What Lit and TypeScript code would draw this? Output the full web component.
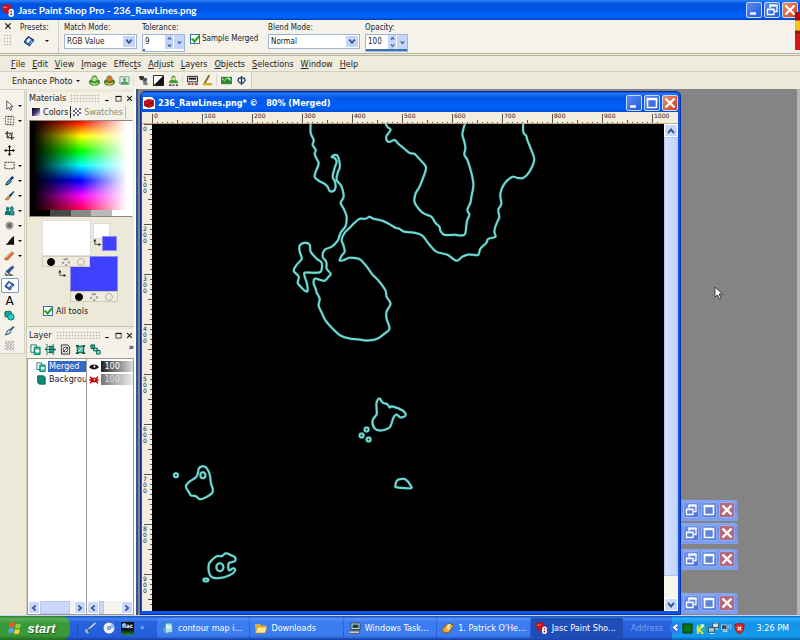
import { LitElement, html, svg, css, nothing } from "lit";
import { customElement, property } from "lit/decorators.js";

const S = (body: unknown, cls = "ic") => html`<svg class=${cls} viewBox="0 0 12 12" aria-hidden="true">${body}</svg>`;

const ICONS: Record<string, unknown> = {
  pointer: svg`<path d="M3 1v9l2.4-2 1.6 3.4 1.4-.7L7 7.3h3z" fill="#fff" stroke="#333" stroke-width=".9"/>`,
  grid: svg`<path d="M1.5 1.5h9v9h-9zM4.5 1v10M7.5 1v10" fill="none" stroke="#222" stroke-dasharray="1.5 1.5"/>`,
  crop: svg`<path d="M3.5 1v7.5H11M1 3.500h7.500V11" fill="none" stroke="#222" stroke-width="1.200"/><path d="M3.500 8.500l6-6" stroke="#555"/>`,
  move: svg`<path d="M6 1v10M1 6h10" stroke="#111" stroke-width="1.200"/><path d="M6 0L4 2.500h4zM6 12L4 9.500h4zM0 6l2.500-2v4zM12 6L9.500 4v4z" fill="#111"/>`,
  rect: svg`<rect x="1" y="2.500" width="10" height="7" fill="none" stroke="#222" stroke-dasharray="2 1"/>`,
  dropper: svg`<path d="M2 11l1-3 3-3 2 2-3 3z" fill="#2ab0c8" stroke="#124"/><path d="M6 4l3-3 2 2-3 3z" fill="#12397a"/>`,
  brush: svg`<path d="M5 6l5.500-5L11.500 2 7 8z" fill="#234a86"/><path d="M1 10c2 0 2-3 4-3.500l1.500 1.500C5.500 11 3 11.500 1 10z" fill="#e08a38" stroke="#734" stroke-width=".5"/>`,
  clone: svg`<path d="M1 11V7.500L3 6 2 4l1-2h2l1 2-1 2 2 1.500V11z" fill="#0c7c78"/><path d="M6 11V7l1.500-1-1-2 1-2h2l1 2-1 2L11 7v4z" fill="#2b9a94" stroke="#023" stroke-width=".5"/>`,
  soften: svg`<circle cx="6" cy="6" r="4.500" fill="#bbb"/><circle cx="6" cy="6" r="3.500" fill="#888"/><circle cx="6" cy="6" r="1.800" fill="#666"/>`,
  burn: svg`<path d="M11 1v9.500H1.500C5 9 6 4 11 1z" fill="#111"/>`,
  eraser: svg`<path d="M1 9l7-7 3 1.500-7 7.500-3-.5z" fill="#e07038" stroke="#8a3a18" stroke-width=".5"/><path d="M2.500 8l6-6" stroke="#f9d0b0"/>`,
  bgerase: svg`<path d="M2 7l7-6 2 1.500L5 9z" fill="#2c5aa8" stroke="#123" stroke-width=".5"/><path d="M1 8.500l2 2M4 8l4 3M1 11h9" stroke="#123"/>`,
  bucket: svg`<path d="M1 7L5 1.500l6 3.500-4.500 6z" fill="#2f5f9c" stroke="#123d70"/><path d="M3 6.500l2.500-3.500 2.500 1.500-2.500 3.800z" fill="#e4f0ff"/><path d="M7.500 5.500l1.500 1-2 3" fill="none" stroke="#a8c8ee"/>`,
  shape: svg`<rect x="1" y="1.500" width="7" height="6" rx="1" fill="#18a89c" stroke="#065"/><circle cx="7.500" cy="7.500" r="3.500" fill="#2acdc0" stroke="#076" />`,
  knife: svg`<path d="M1.500 11L4 6l2-1 1.500 2L6.500 9z" fill="#cfe2f0" stroke="#245"/><path d="M6 5l4-4 1.500 1.500-4 4z" fill="#345a86"/>`,
  warp: svg`<path d="M1.500 1.500h9v9h-9z" fill="none" stroke="#aaa" stroke-dasharray="2 1"/><path d="M2 2l8 8M10 2l-8 8M6 2l3 4-3 4-3-4z" fill="none" stroke="#aaa"/>`,
  photo1: svg`<path d="M0 7.500C0 5.500 1.500 5 3 5 2 2.500 4 .5 6 .5S10 2.500 9 5c1.500 0 3 .5 3 2.500 0 3-3 4-6 4s-6-1-6-4z" fill="#3a8a35"/><circle cx="6" cy="4.500" r="2.500" fill="#b8e08a"/><path d="M2 8.500q4 2.500 8 0" fill="none" stroke="#c9e77b" stroke-width="1.500"/>`,
  photo2: svg`<path d="M0 7.500C0 5.500 1.500 5 3 5 2 2.500 4 .5 6 .5S10 2.500 9 5c1.500 0 3 .5 3 2.500 0 3-3 4-6 4s-6-1-6-4z" fill="#4a7d2d"/><circle cx="6" cy="4" r="3" fill="#d9762c"/><path d="M2 8.500q4 2.500 8 0" fill="none" stroke="#f0c53f" stroke-width="1.500"/>`,
  photo3: svg`<path d="M1 2h10v8H1z" fill="#dff0e4" stroke="#5a9c76"/><path d="M2 10c0-3 2-3 4-3s4 0 4 3" fill="#46a052"/><circle cx="6" cy="5" r="1.700" fill="#559a6e"/>`,
  vase: svg`<path d="M1 1h5l1 3-2 2-3-1z" fill="#333"/><path d="M5 5l4 1 2 5H6z" fill="#7a7c86"/><circle cx="8" cy="5" r="2" fill="#49505c"/>`,
  contrast: svg`<path d="M.5 .5h11v11H.5z" fill="#fff" stroke="#111"/><path d="M11.500.5v11H.5z" fill="#111"/>`,
  person: svg`<path d="M1 9c0-3 2-3 3-4C3 2 5 .5 6 .5S9 2 8 5c1 1 3 1 3 4z" fill="#4f9a35"/><circle cx="6" cy="4" r="1.800" fill="#d6e48c"/><path d="M1 11h3M5 11h2M8.500 11H11" stroke="#222" stroke-width="1.500"/>`,
  strip: svg`<path d="M.5 1.500h11v6H.5z" fill="#eee" stroke="#111"/><path d="M2 4h8" stroke="#111" stroke-width="2"/><path d="M1 10h3M5 10h2M8.500 10H12" stroke="#b33" stroke-width="2"/>`,
  angle: svg`<path d="M8 0L2 10.500" stroke="#8a6a18" stroke-width="2"/><path d="M1 10h10" stroke="#d8ac28" stroke-width="2.500"/>`,
  landscape: svg`<path d="M0 2h12v8H0z" fill="#2f8c3b"/><path d="M1 4l3 2 3-3 4 3" fill="none" stroke="#c9ecbd"/><circle cx="9" cy="4" r="1" fill="#ffe"/>`,
  phi: svg`<path d="M6 1v10" stroke="#1c3f63" stroke-width="1.500"/><path d="M3 3.500h6L10 6 8 8.500H4L2 6z" fill="none" stroke="#1c3f63" stroke-width="1.300"/>`,
  layer: svg`<path d="M1 1h6v8H1z" fill="#fff" stroke="#0a6b64"/><path d="M4.500 3.500h6.500v8H4.500z" fill="#2ec0b0" stroke="#075"/><path d="M6 6h4v3H6z" fill="#fff"/>`,
  layerbg: svg`<path d="M2 1h7l2 2v8H4L2 9z" fill="#0d8a7e" stroke="#054"/>`,
  layerv: svg`<path d="M1 1h10v10H1z" fill="none" stroke="#064" stroke-dasharray="2 5"/><path d="M2 3h5v6H2z" fill="#fff" stroke="#0a6b64"/><path d="M5 2.500h4.500v7H5z" fill="#18a596" stroke="#064"/><path d="M0 6h12" stroke="#064"/>`,
  mask: svg`<path d="M1.500 1h7l2 2v8h-9z" fill="#ddd" stroke="#333"/><circle cx="6" cy="6" r="2.500" fill="#fff" stroke="#444"/><path d="M3 9l6-6" stroke="#444"/>`,
  group: svg`<path d="M1 1h3v2H1zM8 1h3v2H8zM1 9h3v2H1zM8 9h3v2H8z" fill="#054"/><path d="M2.500 2.500h7v7h-7z" fill="#5abdb2" stroke="#143"/><path d="M4 8l4-4" stroke="#fff"/>`,
  link: svg`<path d="M1 1h4v4H1z" fill="#1fae9f" stroke="#054"/><path d="M7 7h4v4H7zM4 4.500h4v3H4z" fill="#7fdcd2" stroke="#054"/>`,
  eye: svg`<path d="M0 6c3-4 9-4 12 0-3 4-9 4-12 0z" fill="#111"/><circle cx="6.500" cy="5.500" r="1.300" fill="#fff"/>`,
  eyeoff: svg`<path d="M0 6c3-4 9-4 12 0-3 4-9 4-12 0z" fill="#c11"/><path d="M1 2l10 8M11 2L1 10" stroke="#b00" stroke-width="1.500"/><circle cx="6.500" cy="5.500" r="1" fill="#fff"/>`,
  psp: svg`<path d="M0 2l3-2 5 1 1 5-3 3-5-1z" fill="#c3111a"/><path d="M1 3h4" stroke="#f77"/><circle cx="8.500" cy="6.800" r="2.400" fill="#fff"/><circle cx="8.500" cy="9.500" r="2.500" fill="#fff"/><circle cx="8.500" cy="6.800" r=".8" fill="#912"/><circle cx="8.500" cy="9.500" r=".9" fill="#912"/>`,
  pspdoc: svg`<path d="M0 0h9l3 3v9H0z" fill="#fff"/><path d="M1 4l4-2 6 1v6l-5 2-5-2z" fill="#c3111a"/><path d="M6 6h4M3 8h3" stroke="#511"/>`,
  notes: svg`<path d="M3 1h7l1 9-7 1.500L1 9z" fill="#9fe0ee" stroke="#3a86b4"/><path d="M4 4h5M4 6h5" stroke="#fff"/><path d="M3 1v9" stroke="#2d75ab"/>`,
  folder: svg`<path d="M0 2h5l1 1.500h5v2H3L.5 10z" fill="#e8b030"/><path d="M2.500 5H12l-2 6H.5z" fill="#ffe68a" stroke="#c8901c" stroke-width=".6"/>`,
  computer: svg`<path d="M2 1h9v6.500H2z" fill="#d8d8d0" stroke="#444"/><path d="M3.500 2.500h6v3.500h-6z" fill="#124a4a"/><path d="M0 9h10.500v2.500H0z" fill="#d0d0c8" stroke="#444" stroke-width=".7"/>`,
  winamp: svg`<path d="M0 8l5-6.500L12 3 7 10.500 2 11z" fill="#f0a030" stroke="#6a4a20" stroke-width=".8"/><path d="M7 2L4 6.500h2.500L4.500 10 9 5.500H6.500L9 2z" fill="#fff4c8"/>`,
  pen: svg`<path d="M2 8.500L10.500 1" stroke="#d8dfe8" stroke-width="1.500"/><path d="M0 6.500l4 4-1 1.500-3-2z" fill="#9fb2c8"/><path d="M3 9l2-2" stroke="#555" stroke-width="2"/>`,
  disc: svg`<circle cx="6" cy="6" r="5.500" fill="#e9f1fb"/><path d="M6 6L9 1.200A5.500 5.500 0 0 1 11.500 6z" fill="#9ec0e8"/><circle cx="6" cy="6" r="2" fill="#5a7ea8"/><circle cx="6" cy="6" r=".8" fill="#fff"/>`,
  traygreen: svg`<path d="M1 1h10v10H1z" fill="#096a12" stroke="#023a06"/><path d="M1 4h10M1 7h10M4.500 1v10M8 1v10" stroke="#0b8318" stroke-width=".6"/>`,
  trayk: svg`<path d="M2 1h9v8H2z" fill="#2bb6a4"/><path d="M3 3v9M8.500 3L4 7.500l5 4.500" fill="none" stroke="#efe83a" stroke-width="2"/><circle cx="8" cy="3" r="2" fill="#d4f2ec"/>`,
  net: svg`<path d="M5 0h6.500v5H5z" fill="#cfe2e8" stroke="#345"/><path d="M.5 5H7v5H.5z" fill="#a9d0d4" stroke="#345"/><path d="M2 11.500h5M8 6.500h3" stroke="#dfe"/>`,
  wifi: svg`<path d="M.5 2h6v5h-6z" fill="#33456c" stroke="#c5cee0"/><path d="M2 9h5" stroke="#ccd" stroke-width="2"/><path d="M8 2q1.500 2 0 4M10 1q2.500 3 0 6" fill="none" stroke="#9dd6f8"/>`,
  shield: svg`<path d="M6 0l5 1.500c0 6-1 8-5 10.500-4-2.500-5-4.500-5-10.500z" fill="#d8251d" stroke="#822"/><path d="M4 4l4 4M8 4L4 8" stroke="#fff" stroke-width="1.400"/>`,
  chev: svg`<path d="M3 4l3 3.500L9 4" fill="none" stroke="#3c5a90" stroke-width="2"/>`,
  chevup: svg`<path d="M3 8l3-3.500L9 8" fill="none" stroke="#3c5a90" stroke-width="2"/>`,
  chevl: svg`<path d="M8 3L4.500 6 8 9" fill="none" stroke="#3c5a90" stroke-width="2"/>`,
  chevr: svg`<path d="M4 3l3.500 3L4 9" fill="none" stroke="#3c5a90" stroke-width="2"/>`,
  swap: svg`<path d="M2.500 4v4.500H8" fill="none" stroke="#222"/><path d="M2.500 1L.5 4.500h4zM11 8.500L7.500 6.500v4z" fill="#222"/>`,
  pmin: svg`<path d="M2 9.500h6" stroke="#111" stroke-width="2"/>`,
  pmax: svg`<path d="M1.500 2.500h9v8h-9z" fill="none" stroke="#111" stroke-width="1.200"/><path d="M1 2.500h10" stroke="#111" stroke-width="2"/>`,
  px: svg`<path d="M2 2l8 8M10 2l-8 8" stroke="#111" stroke-width="1.800"/>`,
  min: svg`<path d="M2 9.500h6" stroke="#fff" stroke-width="2.400"/>`,
  max: svg`<path d="M1.500 2v8.500h9V2" fill="none" stroke="#fff" stroke-width="1.600"/><path d="M.7 2h10.600" stroke="#fff" stroke-width="2.400"/>`,
  restore: svg`<path d="M4 4V1.500h7v6H8.500" fill="none" stroke="#fff" stroke-width="1.300"/><path d="M1.500 5v5.500h6.500V5" fill="none" stroke="#fff" stroke-width="1.300"/><path d="M1 5.300h7.500M3.500 1.500h8" stroke="#fff" stroke-width="1.800"/>`,
  close: svg`<path d="M1.500 1.500l9 9M10.500 1.500l-9 9" stroke="#fff" stroke-width="2.400"/>`,
};
const icon = (n: string) => S(ICONS[n]);

const reset = css`
  * { box-sizing: border-box; }
  button, input, select { font: inherit; color: inherit; margin: 0; padding: 0; border: 0; background: none; border-radius: 0; min-width: 0; }
  button { display: flex; align-items: center; justify-content: center; white-space: nowrap; }
  .ic { width: 12px; height: 12px; display: block; flex: none; }
`;

@customElement("window-buttons")
class WindowButtons extends LitElement {
  @property() kinds = "min max close";
  @property({ type: Boolean, reflect: true }) faded = false;
  static styles = [reset, css`
    :host { display: flex; gap: 2px; }
    button { width: 16px; height: 16px; border: 1px solid #c7d8fb; border-radius: 2px; background: linear-gradient(135deg, #5c8cf2, #2258dc); }
    .close { background: linear-gradient(135deg, #ee8a68, #cf4020); }
    :host([faded]) button { border-color: #8fb0f4; background: linear-gradient(135deg, #7195ea, #4a72d6); }
    :host([faded]) .close { background: #b8687e; }
  `];
  render() {
    return this.kinds.split(" ").map((k) => html`<button class=${k} aria-label=${k}>${icon(k)}</button>`);
  }
}

type Pt = [number, number];
const pts = (s: string): Pt[] => s.split(" ").map((p) => p.split(",").map(Number) as Pt);

/** Catmull-Rom curve through all points. */
function curve(p: Pt[], closed: boolean) {
  const n = p.length;
  const at = (i: number) => (closed ? p[(i + n) % n] : p[Math.max(0, Math.min(n - 1, i))]);
  let d = `M${p[0]}`;
  for (let i = 0; i < (closed ? n : n - 1); i++) {
    const [a, b, c, e] = [at(i - 1), at(i), at(i + 1), at(i + 2)];
    d += `C${b[0] + (c[0] - a[0]) / 6} ${b[1] + (c[1] - a[1]) / 6} ${c[0] - (e[0] - b[0]) / 6} ${c[1] - (e[1] - b[1]) / 6} ${c[0]} ${c[1]}`;
  }
  return d;
}

const COAST = [
  "311,122 311,133 314,140 313,145 316,150 315,154 317,159 319,163 318,167 316,172 315,177 318,180 321,182 325,184 328,187 330,191 334,191 336,187 335,181 333,177 335,168 337,162 335,158 332,157 335,155 338,156 340,163 340,168 338,173 337,180 341,185 343,190 344,197 341,203 343,207 345,211 347,217 346,226 341,233 338,241 332,247 325,250 323,257 326,261 327,264 327,269 331,274 329,277 325,281 320,280 315,279 314,284 316,289 317,293 320,299 319,306 322,313 326,321 333,329 341,336 350,339 360,340 368,341 378,339 385,334 390,329 387,319 387,312 391,304 387,297 386,291 379,281 373,275 368,268 363,262 359,259 350,258 345,260 340,261 342,256 345,252 344,246 342,240 345,233 350,228 355,223 360,219 366,219 370,217 374,219 383,221 391,225 396,228 400,229 405,232 415,233 423,236 430,245 437,252 448,255 457,261 463,257 468,255 474,255 479,255 481,249 487,243 489,239 496,237 495,232 496,227 498,222 500,217 499,210 502,204 501,194 505,184 513,177 518,178 524,178 530,172 535,160 532,150 528,140 527,136 524,132 524,122",
  "385,122 388,127 391,130 387,136 387,140 390,142 395,140 399,144 404,148 410,153 415,154 418,157 426,166 426,171 424,177 420,187 416,194 415,202 420,210 425,214 432,217 436,223 440,227 441,231 445,235 455,235 465,235 467,225 468,220 470,215 468,210 471,203 472,197 474,185 472,173 468,160 465,155 466,148 465,142 463,135 464,129 466,122",
];
const ISLANDS = [
  "305,243 300,246 300,252 302,259 297,265 294,271 299,277 298,283 301,287 305,291 308,291 307,283 305,277 305,273 313,273 321,272 322,263 317,259 311,252 310,245",
  "380,399 377,403 377,409 377,415 373,421 375,429 381,431 390,428 394,418 397,415 401,418 406,416 403,411 393,407 390,408 388,405 383,403",
  "396,486 397,482 400,480 406,480 411,486 411,489 397,488",
  "203,467 199,469 198,474 196,478 190,482 186,487 189,493 191,496 196,497 200,500 206,498 212,494 213,490 211,484 210,476 207,469",
  "226,554 222,557 217,557 212,561 209,565 209,573 212,578 220,579 230,576 235,572 234,569 229,571 229,564 235,562 235,558 231,556",
];
const OUTLINES = [...COAST.map((s) => curve(pts(s), false)), ...ISLANDS.map((s) => curve(pts(s), true))];
const DOTS = [[367, 430, 2, 2], [362, 436, 2, 2], [369, 440, 2, 2], [176, 476, 2, 2], [203, 476, 2.5, 3], [220, 568, 3.5, 4], [206, 581, 2.5, 1.5]];

@customElement("image-window")
class ImageWindow extends LitElement {
  static styles = [reset, css`
    :host { display: flex; flex-direction: column; border: 1px solid #0b2fa0; border-radius: 5px 5px 0 0; background: #0d55e6; padding: 1px 2px 3px 1px; }
    .title { display: flex; align-items: center; gap: 3px; height: 19px; flex: none; padding: 0 0 0 1px; background: linear-gradient(#2a7df8, #0058e8 25%, #0060f6 80%, #0050d8); color: #fff; font: bold 9px "DejaVu Sans Condensed", "DejaVu Sans", sans-serif; white-space: pre; }
    .title span { flex: 1; }
    .body { flex: 1; display: grid; grid-template: 12px 1fr / 10px 1fr 14px; min-height: 0; background: #f2eddd; }
    .hruler { grid-column: 1 / 4; width: 100%; height: 12px; border-bottom: 1px solid #c8a878; }
    .vruler { width: 10px; height: 100%; }
    .rul { stroke: #555; stroke-width: 1; }
    .num { font: 6px "DejaVu Sans", sans-serif; fill: #222; }
    .canvas { background: #000; width: 100%; height: 100%; display: block; min-height: 0; }
    .line { fill: none; stroke: #74d9d2; stroke-width: 2; stroke-linejoin: round; }
    .glow { fill: none; stroke: #0a3d3b; stroke-width: 3; stroke-linejoin: round; }
    .bar { display: flex; flex-direction: column; background: #f6f5ee; }
    .bar button { height: 13px; background: #c9d8fc; border: 1px solid #fff; }
    .thumb { flex: 1; background: linear-gradient(90deg, #d8e3ff, #c2d2fb); border: 1px solid #b4c6f6; }
    .track { height: 22px; }
  `];
  render() {
    const ticks = Array.from({ length: 102 }, (_, i) => i);
    return html`
      <div class="title">${icon("pspdoc")}<span>236_RawLines.png* ©   80% (Merged)</span><window-buttons></window-buttons></div>
      <div class="body">
        <svg class="hruler">
          ${ticks.map((i) => svg`<path class="rul" d="M${10.5 + i * 5} 12v${i % 10 ? (i % 5 ? -2 : -4) : -10}"/>`)}
          ${ticks.filter((i) => i % 10 === 0).map((i) => svg`<text class="num" x=${12 + i * 5} y="6">${i * 10}</text>`)}
        </svg>
        <svg class="vruler">
          ${ticks.slice(0, 97).map((i) => svg`<path class="rul" d="M10 ${0.5 + i * 5}h${i % 10 ? (i % 5 ? -2 : -4) : -8}"/>`)}
          ${ticks.slice(0, 97).filter((i) => i % 10 === 0).map((i) => [...String(i * 10)].map((c, k) => svg`<text class="num" x="1" y=${7 + i * 5 + k * 6}>${c}</text>`))}
        </svg>
        <svg class="canvas" viewBox="152 124 513 487" preserveAspectRatio="xMinYMin meet" role="img" aria-label="Contour lines">
          ${["glow", "line"].map((c) => svg`${OUTLINES.map((d) => svg`<path class=${c} d=${d}/>`)}${DOTS.map(([x, y, a, b]) => svg`<ellipse class=${c} cx=${x} cy=${y} rx=${a} ry=${b}/>`)}`)}
        </svg>
        <div class="bar">
          <button aria-label="Scroll up">${icon("chevup")}</button><div class="thumb"></div><div class="track"></div>
          <button aria-label="Scroll down">${icon("chev")}</button>
        </div>
      </div>`;
  }
}

const TOOLS: [string, boolean][] = [["pointer", true], ["grid", true], ["crop", false], ["move", false], ["rect", true], ["dropper", true], ["brush", true], ["clone", true], ["soften", true], ["burn", true], ["eraser", true], ["bgerase", false], ["bucket", false], ["text", false], ["shape", false], ["knife", false], ["warp", false]];
const MENUS: [string, string, string][] = [["", "F", "ile"], ["", "E", "dit"], ["", "V", "iew"], ["", "I", "mage"], ["Effec", "t", "s"], ["", "A", "djust"], ["", "L", "ayers"], ["", "O", "bjects"], ["", "S", "elections"], ["", "W", "indow"], ["", "H", "elp"]];
const TASKS: [string, string][] = [["notes", "contour map i..."], ["folder", "Downloads"], ["computer", "Windows Task..."], ["winamp", "1. Patrick O'He..."], ["psp", "Jasc Paint Sho..."]];

@customElement("app-root")
class AppRoot extends LitElement {
  static styles = [reset, css`
    :host { display: flex; flex-direction: column; min-height: 100vh; position: relative; overflow: hidden; background: #ece9d8; color: #222; font: 9px/12px "DejaVu Sans Condensed", "DejaVu Sans", sans-serif; }
    .title { display: flex; align-items: center; gap: 3px; height: 20px; padding: 0 2px 0 2px; background: linear-gradient(#2b83f8, #0052dd 20%, #0059ee 60%, #0066ff 85%, #0040b8); color: #fff; font: bold 10px "Lato", "DejaVu Sans Condensed", sans-serif; }
    .title span { flex: 1; white-space: nowrap; }
    .title .ic { width: 13px; height: 13px; }
    .options { display: flex; height: 34px; background: #f5f2ea; border-bottom: 1px solid #b5b5a2; font-size: 8px; line-height: 10px; }
    .handle { width: 15px; display: flex; flex-direction: column; align-items: center; gap: 4px; padding-top: 2px; }
    .handle button .ic { width: 8px; height: 8px; }
    .dots { background-image: radial-gradient(circle, #bbb8aa 40%, transparent 50%); background-size: 3px 3px; }
    .handle .dots { width: 9px; height: 12px; }
    .opt { display: flex; flex-direction: column; gap: 1px; padding-top: 3px; margin-left: 5px; flex: none; white-space: nowrap; }
    .presets { width: 39px; border-right: 1px dotted #aaa; }
    .presets button { justify-content: flex-start; gap: 10px; padding: 1px 0 0 3px; }
    .w73 { width: 73px; } .w43 { width: 43px; } .w92 { width: 92px; }
    .combo { display: flex; height: 15px; align-items: center; border: 1px solid #9db6d8; background: #fff; position: relative; }
    .combo select { appearance: none; flex: 1; width: 100%; height: 13px; padding-left: 2px; }
    .combo .ic { position: absolute; right: 1px; top: 1px; background: #c4d5fc; height: 11px; pointer-events: none; }
    .spin { display: flex; height: 18px; border: 1px solid #9db6d8; background: #fff; align-items: flex-start; position: relative; }
    .spin input[type="text"] { width: 22px; height: 12px; padding-left: 2px; flex: 1; }
    .spin button { width: 8px; height: 14px; background: #c4d5fc; flex-direction: column; }
    .spin button.drop { width: 10px; margin-left: 1px; }
    .spin .ic { width: 7px; height: 7px; }
    .level { position: absolute; left: 0; bottom: 0; height: 2px; background: #3d72ae; }
    .check { display: flex; align-items: center; gap: 3px; white-space: nowrap; }
    .check input { appearance: none; width: 10px; height: 10px; border: 1px solid #3a6ea0; background: #fff; display: grid; place-items: center; }
    .check input::before { content: ""; width: 3px; height: 6px; border: solid #21a121; border-width: 0 2px 2px 0; rotate: 42deg; translate: 0 -1px; }
    .merged { width: 73px; margin-left: 5px; padding-top: 4px; gap: 2px; }
    .menus { display: flex; align-items: center; height: 17px; gap: 7px; padding-left: 11px; border-top: 1px solid #b5b5a2; border-bottom: 1px solid #d2cebc; margin-top: 1px; background: #efebdd; }
    .toolbar { display: flex; height: 17px; width: 252px; align-items: center; gap: 3px; padding-left: 12px; background: #f4f1e8; border-right: 1px solid #d2cebc; }
    .tb { display: flex; gap: 4px; padding-left: 4px; border-left: 1px solid #ddd8c8; }
    .tb .ic { width: 11px; height: 11px; }
    .tri { display: block; width: 0; height: 0; border: 2px solid transparent; border-top-color: #111; border-bottom: 0; }
    .tb:first-of-type { border: 0; margin-left: 2px; }
    .enh { gap: 3px; }
    .work { flex: 1; display: flex; min-height: 0; }
    .strip { width: 25px; align-self: flex-start; background: #f5f2ea; border: 1px solid #d5d1c0; border-left: 0; padding: 8px 0 0 1px; }
    .tool { width: 22px; height: 15px; justify-content: flex-start; gap: 3px; padding-left: 3px; }
    .tool .ic { width: 11px; height: 11px; }
    .tool.on { width: 18px; height: 15px; background: #fff; border: 1px solid #7b9ac8; border-radius: 2px; padding-left: 2px; }
    .letter { width: 11px; font: 12px/12px "DejaVu Sans", sans-serif; color: #000; }
    .panels { width: 110px; margin-left: 1px; padding-top: 3px; display: flex; flex-direction: column; background: #ece9d8; border-right: 2px solid #fff; border-left: 1px solid #cfcbb9; }
    .phead { display: flex; align-items: center; height: 12px; padding: 0 1px 0 2px; gap: 4px; background: #f4f1e8; }
    .phead .dots { flex: 1; height: 8px; }
    .phead button .ic { width: 7px; height: 7px; }
    .tabs { display: flex; height: 16px; align-items: center; background: #f4f1e8; gap: 2px; padding-left: 5px; }
    .tabs button { gap: 3px; padding-right: 2px; border-right: 1px solid #222; }
    .tabs .off { color: #8e8a58; border-color: #bbb; }
    .chip { width: 8px; height: 8px; background: linear-gradient(135deg, #000, #437 50%, #fff); }
    .chip2 { width: 8px; height: 8px; background: repeating-conic-gradient(#668 0 25%, #fff 0 50%) 0 0 / 4px 4px; }
    .picker { margin: 0 1px 0 2px; border: 1px solid #8a8878; border-right-color: #fff; }
    .hue { height: 89px; background: linear-gradient(90deg, #000 3%, rgb(0 0 0 / 0) 50%), linear-gradient(90deg, rgb(255 255 255 / 0) 50%, #fff 95%), linear-gradient(red, #ff0 17%, #0f0 34%, #0ff 50%, #00f 67%, #f0f 84%, #f04); }
    .grays { display: flex; height: 6px; background: linear-gradient(90deg, #000 20%, #484848 20% 40%, #888 40% 60%, #bbb 60% 80%, #fff 80%); }
    .swatches { position: relative; height: 88px; flex: none; }
    .sw, .row3, .swap { position: absolute; }
    .white { background: #fff; border: 1px solid #ddd; } .blue { background: #4040ff; border: 1px solid #8e8ee8; }
    .fg { left: 15px; top: 3px; width: 49px; height: 36px; } .bg { left: 43px; top: 39px; width: 48px; height: 36px; }
    .fgs { left: 66px; top: 6px; width: 17px; height: 16px; } .bgs { left: 75px; top: 19px; width: 15px; height: 15px; }
    .r1 { left: 15px; top: 39px; } .r2 { left: 43px; top: 74px; }
    .s1 { left: 66px; top: 21px; } .s2 { left: 31px; top: 52px; }
    .swap .ic { width: 9px; height: 9px; }
    .row3 { display: flex; width: 48px; background: #efebdd; border: 1px solid #cfcbb9; height: 11px; justify-content: space-around; align-items: center; }
    .row3 i { width: 8px; height: 8px; border-radius: 50%; border: 1px solid #b9b5a5; }
    .row3 i:first-child { background: #000; border-color: #000; } .row3 i:nth-child(2) { border: 2px dotted #999; }
    .all { margin: 0 0 0 16px; height: 12px; }
    .lay { margin-top: 9px; border-top: 1px solid #c5c1ae; padding-top: 2px; flex: 1; display: flex; flex-direction: column; min-height: 0; }
    .ltools { display: flex; gap: 4px; height: 17px; align-items: center; padding-left: 3px; background: #f4f1e8; }
    .ltools .ic { width: 11px; height: 11px; }
    .ltools span { margin: -6px 0 0 auto; font-weight: bold; }
    .lists { flex: 1; display: flex; gap: 1px; background: #9c9a8c; padding: 1px; }
    .col { background: #fff; display: flex; flex-direction: column; overflow: hidden; padding-top: 1px; }
    .c1 { flex: 59; width: 59px; } .c2 { flex: 46; width: 46px; }
    .lrow { display: flex; gap: 2px; height: 13px; align-items: center; overflow: hidden; padding-left: 8px; white-space: nowrap; line-height: 11px; }
    .c2 .lrow { padding-left: 2px; }
    .lrow .ic { width: 10px; height: 10px; }
    .lrow b { font-weight: normal; padding: 0 1px; } .lrow .sel { background: #3169c6; color: #fff; flex: 1; }
    .op { flex: 1; color: #fff; padding-left: 3px; background: linear-gradient(90deg, #222, #ddd); }
    .op2 { color: #ddd; padding-left: 3px; flex: 1; background: linear-gradient(90deg, #777, #eee); }
    .hbar { margin-top: auto; display: flex; height: 13px; background: #f4f3ec; }
    .hbar button { width: 12px; background: #c9d8fc; border: 1px solid #fff; } .hbar button .ic { width: 10px; height: 10px; }
    .hbar .mid { flex: 1; display: flex; } .mid i { background: #c9d8fc; border: 1px solid #b4c6f6; width: 88%; } .c2 .mid i { width: 20%; }
    .mdi { flex: 1; position: relative; background: #848484; border-right: 3px solid #b9b7ab; border-left: 2px solid #33568e; min-width: 0; }
    .doc { position: absolute; left: 2px; top: 2px; bottom: 0; width: calc(100% - 118px); }
    .mini { position: absolute; right: 59px; height: 21px; padding: 2px 3px 3px 60px; background: linear-gradient(#86a8f4, #6c8ce6 30%, #7f9ff0); border-radius: 0 4px 0 0; }
    .m1 { bottom: 94px; } .m2 { bottom: 71px; } .m3 { bottom: 45px; } .m4 { bottom: 1px; }
    .cursor { position: absolute; right: 73px; top: 197px; width: 10px; height: 14px; }
    .flag { position: absolute; right: 0; top: 12px; width: 5px; height: 38px; background: linear-gradient(#a80d12 20%, #f2c21b 25% 48%, #8d1411 50% 55%, #d21a1a 58%); }
    .taskbar { display: flex; align-items: center; height: 25px; flex: none; border-top: 1px solid #c3d5f8; background: linear-gradient(#1f4fb8, #3f86f4 12%, #2a63dc 25%, #245ddb 85%, #1941a5); color: #fff; }
    .start { width: 70px; height: 24px; gap: 5px; background: linear-gradient(#2c7c2c, #58b058 12%, #399a39 30%, #3a9a3a 80%, #236d23); border-radius: 0 8px 8px 0; color: #fff; font: italic bold 13px "Liberation Sans", sans-serif; text-shadow: 1px 1px 1px #1c501c; padding-right: 6px; }
    .start .ic { width: 14px; height: 14px; }
    .quick { display: flex; align-items: center; gap: 6px; width: 80px; margin-left: 7px; padding-left: 7px; border-left: 1px dotted #173f9c; }
    .flac { width: 13px; height: 13px; background: linear-gradient(#111 60%, #283); color: #fff; font: bold 6px/8px "DejaVu Sans Condensed", sans-serif; display: block; text-align: center; }
    .more { font-size: 8px; align-self: flex-start; color: #b8ccf4; }
    .tasks { flex: 1; display: flex; gap: 1px; min-width: 0; }
    .task { flex: 1; height: 20px; justify-content: flex-start; gap: 4px; padding-left: 5px; background: linear-gradient(#5a94fa, #3b7cf0 20%, #3b7cf0 85%, #2f66d2); border-radius: 2px; overflow: hidden; }
    .task.on { background: #1e4db8; }
    .addr { width: 47px; text-align: right; color: #7ba2ec; padding-right: 7px; margin-right: 2px; }
    .tray { display: flex; align-items: center; gap: 2px; height: 24px; width: 128px; background: linear-gradient(#0c63c8, #2aaef6 10%, #1392ea 30%, #139bec 85%, #0d62b0); }
    .tray time { margin-left: auto; padding-right: 11px; }
    .tray .round { width: 10px; height: 12px; border-radius: 50%; background: #2e7be6; margin-left: -2px; }
    .tray .ic { width: 11px; height: 11px; }
    .round .ic { filter: brightness(5); }
  `];

  spin(value: string, label: string, level: number) {
    return html`<div class="opt w43"><label for=${label}>${label}:</label>
      <div class="spin"><input type="text" id=${label} .value=${value}>
        <button aria-label="Step">${icon("chevup")}${icon("chev")}</button><button class="drop" aria-label="Slide">${icon("chev")}</button>
        <div class="level" style="width:${level}%"></div></div></div>`;
  }
  combo(value: string, label: string, cls: string, id: string) {
    return html`<div class="opt ${cls}"><label for=${id}>${label}:</label>
      <div class="combo"><select id=${id}><option>${value}</option></select>${icon("chev")}</div></div>`;
  }
  panelHead(name: string) {
    return html`<div class="phead">${name}<div class="dots"></div>
      ${["pmin", "pmax", "px"].map((k) => html`<button aria-label=${k}>${icon(k)}</button>`)}</div>`;
  }
  hbar() {
    return html`<div class="hbar"><button aria-label="Left">${icon("chevl")}</button><div class="mid"><i></i></div><button aria-label="Right">${icon("chevr")}</button></div>`;
  }
  render() {
    return html`
      <header class="title">${icon("psp")}<span>Jasc Paint Shop Pro - 236_RawLines.png</span><window-buttons kinds="min restore close"></window-buttons></header>
      <div class="flag"></div>
      <div class="options">
        <div class="handle"><button aria-label="Close bar">${icon("px")}</button><div class="dots"></div></div>
        <div class="opt presets"><span>Presets:</span><button aria-label="Presets">${icon("bucket")}<span class="tri"></span></button></div>
        ${this.combo("RGB Value", "Match Mode", "w73", "mode")}
        ${this.spin("9", "Tolerance", 5)}
        <label class="check merged"><input type="checkbox" checked>Sample Merged</label>
        ${this.combo("Normal", "Blend Mode", "w92", "blend")}
        ${this.spin("100", "Opacity", 100)}
      </div>
      <nav class="menus">${MENUS.map(([a, u, b]) => html`<button>${a}<u>${u}</u>${b}</button>`)}</nav>
      <div class="toolbar">
        <button class="enh">Enhance Photo<span class="tri"></span></button>
        ${[["photo1", "photo2", "photo3"], ["vase", "contrast", "person"], ["strip", "angle"], ["landscape", "phi"]].map((g) => html`<div class="tb">${g.map((n) => html`<button aria-label=${n}>${icon(n)}</button>`)}</div>`)}
      </div>
      <main class="work">
        <div class="strip">${TOOLS.map(([n, m]) => html`<button class="tool ${n === "bucket" ? "on" : ""}" aria-label=${n}>${n === "text" ? html`<span class="letter">A</span>` : icon(n)}${m ? html`<span class="tri"></span>` : nothing}</button>`)}</div>
        <aside class="panels">
          ${this.panelHead("Materials")}
          <div class="tabs"><button><span class="chip"></span>Colors</button><button class="off"><span class="chip2"></span>Swatches</button></div>
          <div class="picker"><div class="hue"></div><div class="grays"></div></div>
          <div class="swatches">
            <div class="sw bg blue"></div><div class="sw fg white"></div><div class="sw fgs white"></div><div class="sw bgs blue"></div>
            <div class="row3 r1"><i></i><i></i><i></i></div><div class="row3 r2"><i></i><i></i><i></i></div>
            <div class="swap s1">${icon("swap")}</div><div class="swap s2">${icon("swap")}</div>
          </div>
          <label class="check all"><input type="checkbox" checked>All tools</label>
          <section class="lay">
            ${this.panelHead("Layer")}
            <div class="ltools">${["layer", "layerv", "mask", "group", "link"].map((n) => html`<button aria-label=${n}>${icon(n)}</button>`)}<span>»</span></div>
            <div class="lists">
              <div class="col c1"><div class="lrow">${icon("layer")}<b class="sel">Merged</b></div><div class="lrow">${icon("layerbg")}<b>Background</b></div>${this.hbar()}</div>
              <div class="col c2"><div class="lrow">${icon("eye")}<span class="op">100</span></div><div class="lrow">${icon("eyeoff")}<span class="op2">100</span></div>${this.hbar()}</div>
            </div>
          </section>
        </aside>
        <div class="mdi">
          ${[1, 2, 3, 4].map((n) => html`<div class="mini m${n}"><window-buttons faded kinds="restore max close"></window-buttons></div>`)}
          <image-window class="doc"></image-window>
          <svg class="cursor" viewBox="0 0 10 14"><path d="M1 1v10l2.500-2 2 4 1.500-1-2-4h3.500z" fill="#fff" stroke="#222" stroke-width=".8"/></svg>
        </div>
      </main>
      <footer class="taskbar">
        <button class="start"><svg class="ic" viewBox="0 0 14 14"><path d="M2 2q2.500-1.500 5 0L6 6.500q-2.500-1-5 0z" fill="#ef5a28"/><path d="M8 2.500q2.500 1.500 5 0L12 7q-2.500 1-5 0z" fill="#8ed03c"/><path d="M1 7.500q2.500-1.500 5 0L5 12q-2.500-1-5 0z" fill="#5aa0f8"/><path d="M7 8q2.500 1.500 5 0l-1 4.500q-2.500 1-5 0z" fill="#fbd12e"/></svg>start</button>
        <div class="quick">${icon("pen")}${icon("disc")}<span class="flac">flac</span><span class="more">»</span></div>
        <div class="tasks">${TASKS.map(([i, t], k) => html`<button class="task ${k === 4 ? "on" : ""}">${icon(i)}${t}</button>`)}</div>
        <span class="addr">Address</span>
        <div class="tray"><span class="round">${icon("chevl")}</span>${["traygreen", "trayk", "net", "wifi", "shield"].map(icon)}<time>3:26 PM</time></div>
      </footer>`;
  }
}
